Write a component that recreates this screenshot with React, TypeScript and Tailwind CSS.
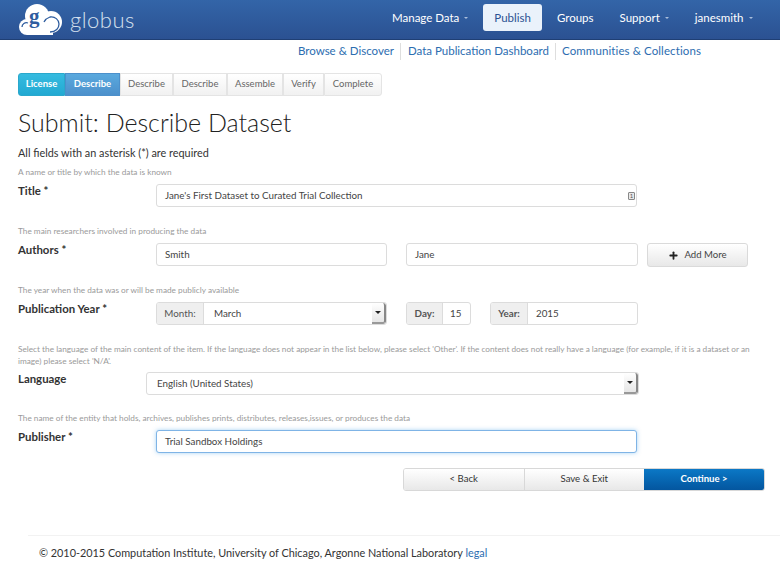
import { Plus } from 'lucide-react';

const steps = [
  { label: 'License', className: 'bg-gradient-to-b from-[#35bbe0] to-[#22a9d2] text-white font-bold w-[47px] rounded-l-[3px] border-[#2aa8cc]' },
  { label: 'Describe', className: 'bg-gradient-to-b from-[#5aa9de] to-[#4c90cb] text-white font-bold w-[55px] border-[#4c90cb]' },
  { label: 'Describe', className: 'bg-gradient-to-b from-white to-[#f1f1f1] text-[#666] border-[#e4e4e4] w-[53px]' },
  { label: 'Describe', className: 'bg-gradient-to-b from-white to-[#f1f1f1] text-[#666] border-[#e4e4e4] w-[54px]' },
  { label: 'Assemble', className: 'bg-gradient-to-b from-white to-[#f1f1f1] text-[#666] border-[#e4e4e4] w-[56px]' },
  { label: 'Verify', className: 'bg-gradient-to-b from-white to-[#f1f1f1] text-[#666] border-[#e4e4e4] w-[41px]' },
  { label: 'Complete', className: 'bg-gradient-to-b from-white to-[#f1f1f1] text-[#666] border-[#e4e4e4] w-[58px] rounded-r-[3px]' },
];

const navItems = [
  { label: 'Manage Data', caret: true, className: 'ml-[392px]' },
  { label: 'Publish', active: true, className: 'ml-[15px]' },
  { label: 'Groups', className: 'ml-[15px]' },
  { label: 'Support', caret: true, className: 'ml-[26px]' },
  { label: 'janesmith', caret: true, className: 'ml-[26px]' },
];

const inputClass =
  'flex h-[23px] items-center rounded-[3px] border border-[#dcdcdc] bg-white px-2 text-[9.8px] text-[#444]';
const addonClass =
  'flex h-full items-center justify-center border-r border-[#dcdcdc] bg-[#efefef] text-[9.8px] font-bold text-[#555]';

function Logo() {
  return (
    <svg width="44" height="32" viewBox="0 0 44 32" className="shrink-0">
      <circle cx="18" cy="12" r="12" fill="#fff" />
      <circle cx="32" cy="18" r="11" fill="#fff" />
      <circle cx="8" cy="23" r="8" fill="#fff" />
      <rect x="8" y="20" width="26" height="11" fill="#fff" />
      <path
        d="M3 23 C3 20 6 18 9 19 M31 28 C37 28 40 24 40 20 C40 16 36 12 31 13 C28 14 26 16 25 18"
        fill="none"
        stroke="#2f5d9f"
        strokeWidth="1.3"
      />
      <text x="10" y="19" fontFamily="'Liberation Serif', serif" fontSize="21" fontWeight="700" fill="#2f5d9f">
        g
      </text>
    </svg>
  );
}

function SelectCaret() {
  return (
    <div className="flex h-full w-[14px] shrink-0 items-center justify-center rounded-r-[3px] border-r-2 border-b-2 border-r-[#888] border-b-[#999] bg-gradient-to-b from-white to-[#e6e6e6]">
      <div className="h-0 w-0 border-x-[3px] border-t-[3px] border-x-transparent border-t-[#222]" />
    </div>
  );
}

function Hint({ children, className = '' }: { children: React.ReactNode; className?: string }) {
  return <p className={`text-[8.25px] leading-[12px] text-[#9a9a9a] ${className}`}>{children}</p>;
}

function Label({ children }: { children: React.ReactNode }) {
  return <div className="w-[128px] shrink-0 text-[11.4px] leading-[13px] font-bold text-[#333]">{children}</div>;
}

export default function App() {
  return (
    <div className="relative h-[572px] w-[780px] overflow-hidden bg-white font-['Lato','Liberation_Sans',sans-serif]">
      <header className="flex h-[40px] items-center border-b border-[#1f3f74] bg-gradient-to-b from-[#3365a8] to-[#2b5192] pl-[19px]">
        <Logo />
        <span className="ml-[7px] text-[22px] font-light tracking-[0.5px] text-[#d5e0ee]">globus</span>
        <nav className="absolute top-[4px] left-0 flex h-[27px] w-full items-center text-[11.5px] text-white">
          {navItems.map(item => (
            <div
              key={item.label}
              className={`flex h-[27px] items-center rounded-[3px] ${item.className} ${
                item.active ? 'bg-[#eaf2fb] px-[11px] text-[#2b5192]' : ''
              }`}
            >
              {item.label}
              {item.caret && <span className="ml-[5px] h-0 w-0 border-x-[2px] border-t-[2px] border-x-transparent border-t-[#a9bedb]" />}
            </div>
          ))}
        </nav>
      </header>

      <div className="mt-[4px] flex h-[14px] items-center justify-end pr-[79px] text-[11.5px] text-[#2c6db0]">
        <a>Browse &amp; Discover</a>
        <span className="mr-[7px] ml-[6px] h-[17px] w-px bg-[#dedede]" />
        <a>Data Publication Dashboard</a>
        <span className="mx-[6px] h-[17px] w-px bg-[#dedede]" />
        <a className="tracking-[0.1px]">Communities &amp; Collections</a>
      </div>

      <main className="px-[18px]">
        <div className="mt-[15px] flex h-[23px]">
          {steps.map((step, i) => (
            <div key={i} className={`flex items-center justify-center border text-[9.5px] ${step.className}`}>
              {step.label}
            </div>
          ))}
        </div>

        <h1 className="mt-[11px] text-[25px] leading-[30px] font-light text-[#222]">Submit: Describe Dataset</h1>
        <p className="mt-[9px] text-[10.85px] leading-[14px] text-[#333]">All fields with an asterisk (*) are required</p>

        <Hint className="mt-[6px]">A name or title by which the data is known</Hint>
        <div className="mt-[6px] flex">
          <Label>Title *</Label>
          <div className="w-[10px] shrink-0" />
          <div className={`${inputClass} relative w-[481px]`}>
            Jane's First Dataset to Curated Trial Collection
            <span className="absolute top-[7px] right-[1px] flex h-[8px] w-[7px] items-center justify-center rounded-[1px] border border-[#888] bg-[#e8e8e8] text-[6px] leading-none text-[#555]">
              1
            </span>
          </div>
        </div>

        <Hint className="mt-[18px]">The main researchers involved in producing the data</Hint>
        <div className="mt-[6px] flex items-start">
          <Label>Authors *</Label>
          <div className="w-[10px] shrink-0" />
          <div className={`${inputClass} w-[231px]`}>Smith</div>
          <div className={`${inputClass} ml-[19px] w-[232px]`}>Jane</div>
          <button className="ml-[9px] flex h-[24px] w-[101px] items-center justify-center rounded-[3px] border border-[#dadada] bg-gradient-to-b from-white to-[#e8e8e8] text-[9.6px] text-[#444]">
            <Plus size={11} strokeWidth={4} className="mr-[5px] text-[#222]" />
            Add More
          </button>
        </div>

        <Hint className="mt-[17px]">The year when the data was or will be made publicly available</Hint>
        <div className="mt-[6px] flex items-start">
          <Label>Publication Year *</Label>
          <div className="w-[10px] shrink-0" />
          <div className="flex h-[23px] w-[231px] items-center overflow-hidden rounded-[3px] border border-[#dcdcdc]">
            <div className={`${addonClass} w-[47px] shrink-0 font-normal`}>Month:</div>
            <span className="flex-1 pl-[10px] text-[9.8px] text-[#444]">March</span>
            <SelectCaret />
          </div>
          <div className="ml-[19px] flex h-[23px] w-[65px] items-center overflow-hidden rounded-[3px] border border-[#dcdcdc]">
            <div className={`${addonClass} w-[36px] shrink-0`}>Day:</div>
            <span className="pl-[7px] text-[9.8px] text-[#444]">15</span>
          </div>
          <div className="ml-[19px] flex h-[23px] w-[148px] items-center overflow-hidden rounded-[3px] border border-[#dcdcdc]">
            <div className={`${addonClass} w-[37px] shrink-0`}>Year:</div>
            <span className="pl-[8px] text-[9.8px] text-[#444]">2015</span>
          </div>
        </div>

        <Hint className="mt-[18px]">
          Select the language of the main content of the item. If the language does not appear in the list below, please select 'Other'. If the content does not really have a language (for example, if it is a dataset or an image) please select 'N/A'.
        </Hint>
        <div className="mt-[5px] flex items-start">
          <Label>Language</Label>
          <div className="flex h-[23px] w-[493px] items-center rounded-[3px] border border-[#dcdcdc] pl-[10px] text-[9.8px] text-[#444]">
            <span className="flex-1">English (United States)</span>
            <SelectCaret />
          </div>
        </div>

        <Hint className="mt-[17px]">The name of the entity that holds, archives, publishes prints, distributes, releases,issues, or produces the data</Hint>
        <div className="mt-[6px] flex">
          <Label>Publisher *</Label>
          <div className="w-[10px] shrink-0" />
          <div className="flex h-[23px] w-[481px] items-center rounded-[3px] border border-[#7fb4e6] bg-white px-2 text-[9.8px] text-[#444] shadow-[0_0_4px_rgba(82,168,236,0.5)]">
            Trial Sandbox Holdings
          </div>
        </div>

        <div className="mt-[15px] ml-[385px] flex h-[23px] w-[362px] overflow-hidden rounded-[3px] border border-[#d8d8d8] text-[9.6px]">
          <button className="flex-1 border-r border-[#d8d8d8] bg-gradient-to-b from-white to-[#e8e8e8] text-[#333]">&lt; Back</button>
          <button className="flex-1 bg-gradient-to-b from-white to-[#e8e8e8] text-[#333]">Save &amp; Exit</button>
          <button className="w-[120px] bg-gradient-to-b from-[#0b78c6] to-[#04569f] font-bold text-white">Continue &gt;</button>
        </div>
      </main>

      <footer className="mt-[44px] ml-[28px] border-t border-[#f2f2f2] pt-[9px] pl-[11px] text-[10.85px] leading-[15px] text-[#333]">
        © 2010-2015 Computation Institute, University of Chicago, Argonne National Laboratory <a className="text-[#2c6db0]">legal</a>
      </footer>
    </div>
  );
}
